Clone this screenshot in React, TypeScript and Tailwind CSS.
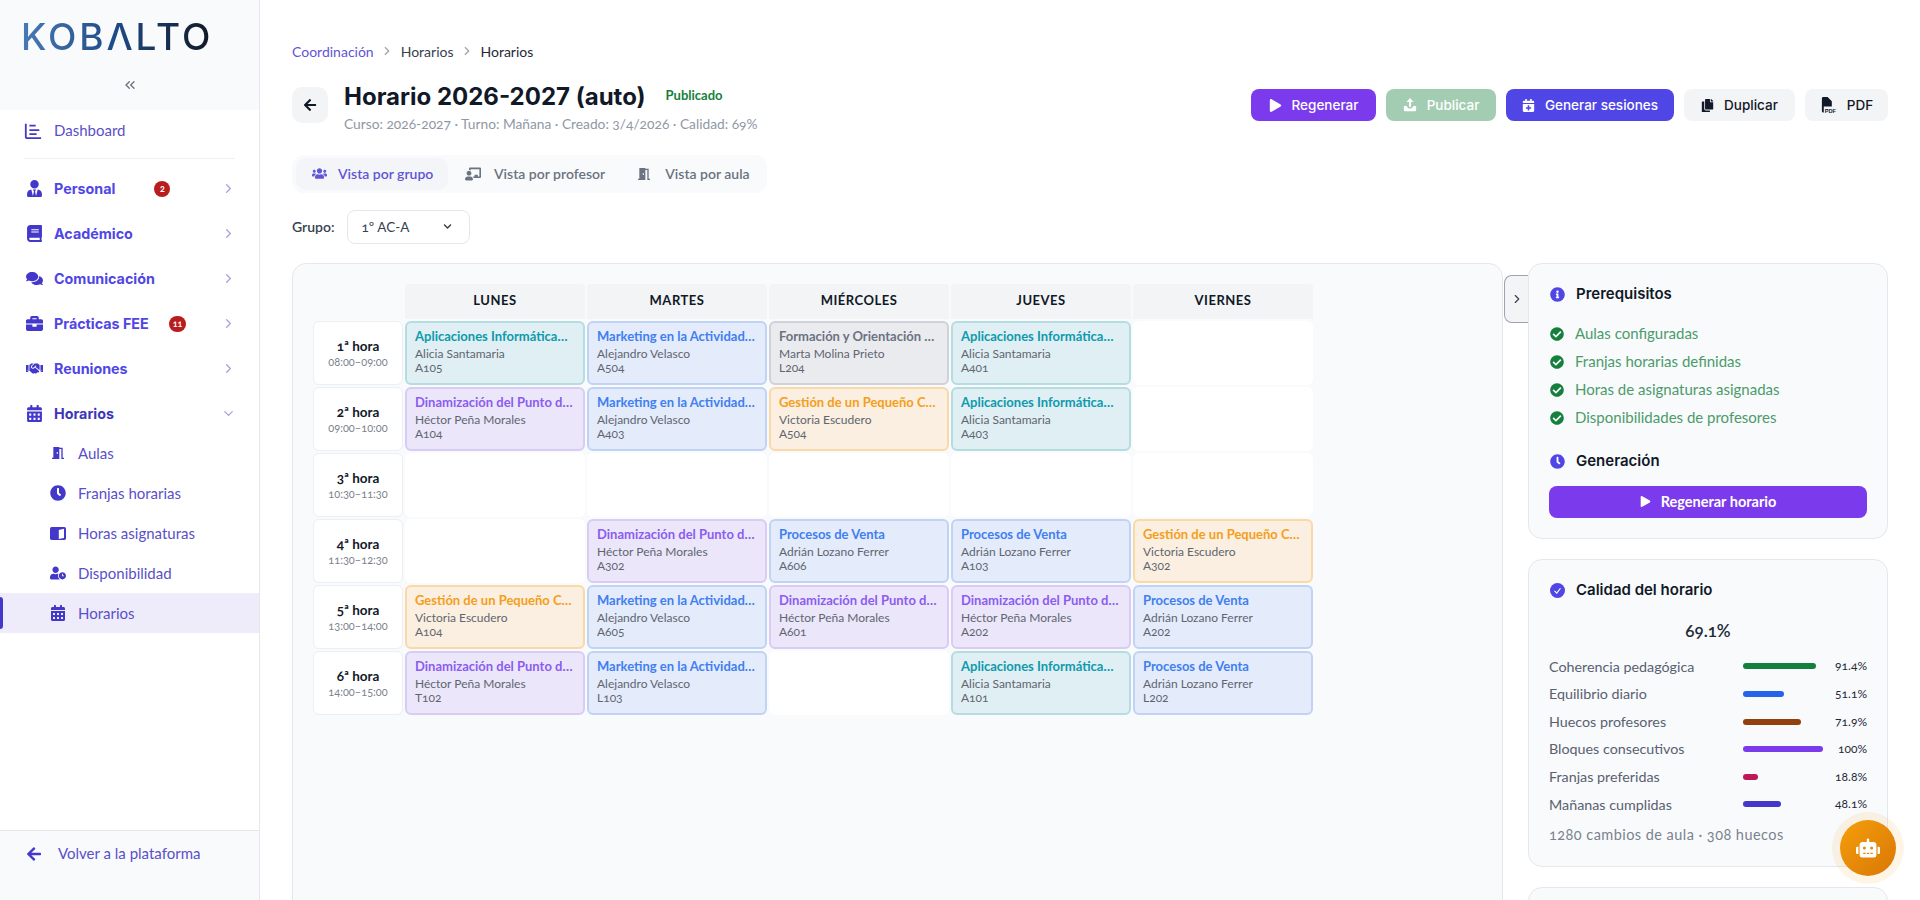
import React from "react";
import { FaUserTie, FaBook, FaComments, FaBriefcase, FaHandshake, FaCalendarAlt, FaClock, FaUserClock, FaArrowLeft, FaUsers, FaChalkboardTeacher, FaPlay, FaCalendarPlus, FaCopy, FaCheckCircle, FaInfoCircle, FaRobot, FaChevronDown } from "react-icons/fa";
import { MdMeetingRoom } from "react-icons/md";
import { LuChevronRight, LuChevronDown, LuChevronsLeft } from "react-icons/lu";

const body = "font-['Lato','Noto_Sans',sans-serif]";
const head = "font-['Inter','Noto_Sans',sans-serif]";
const indigo = "text-[#4338ca]";

function DashIcon() {
  return (
    <svg viewBox="0 0 20 20" className="w-[18px] h-[18px]" fill="none" stroke="#4338ca" strokeWidth="2">
      <path d="M2 2v14a2 2 0 0 0 2 2h15" />
      <path d="M6 4h7M6 9h11M6 13.5h8" />
    </svg>
  );
}

function BookIcon() {
  return (
    <svg viewBox="0 0 20 18" className="w-[16px] h-[15px]">
      <rect x="0" y="1" width="20" height="16" rx="2" fill="#4338ca" />
      <path d="M11 4.5 17.5 3v11.5l-6.5 1.5z" fill="#fff" />
    </svg>
  );
}

function UploadIcon() {
  return (
    <svg viewBox="0 0 16 16" className="w-[14px] h-[14px]" fill="currentColor">
      <path d="M8 0 4 4.5h2.8V10h2.4V4.5H12z" />
      <path d="M1 9h3.2c.4 1.7 2 3 3.8 3s3.4-1.3 3.8-3H15v5a1 1 0 0 1-1 1H2a1 1 0 0 1-1-1z" />
    </svg>
  );
}

function PdfIcon() {
  return (
    <svg viewBox="0 0 18 18" className="w-[17px] h-[17px]" fill="currentColor">
      <path d="M2 1.5A1.5 1.5 0 0 1 3.5 0H8l4.5 4.5V10H4v6.5H3.5A1.5 1.5 0 0 1 2 15z" />
      <text x="5" y="16.5" fontSize="6" fontWeight="700" fontFamily="'Liberation Sans', sans-serif">PDF</text>
    </svg>
  );
}

function Parent({ icon, label, badge, badgeMl, open }: { icon: React.ReactNode; label: string; badge?: string; badgeMl?: string; open?: boolean }) {
  return (
    <div className="h-[45px] flex items-center pl-6 pr-[23px] relative">
      <span className={`w-[20px] flex justify-center text-[17px] ${indigo}`}>{icon}</span>
      <span className={`ml-[10px] text-[14.3px] font-bold ${head} ${open ? "text-[#3d35b8]" : "text-[#4f46e5]"}`}>{label}</span>
      {badge && (
        <span className={`${badgeMl} min-w-[16px] h-[16px] px-1 rounded-full bg-[#b91c1c] text-white text-[9px] font-bold flex items-center justify-center`}>{badge}</span>
      )}
      <span className="ml-auto text-[#a5a3d9] text-[15px]">{open ? <LuChevronDown /> : <LuChevronRight />}</span>
    </div>
  );
}

function Sub({ icon, label, active }: { icon: React.ReactNode; label: string; active?: boolean }) {
  return (
    <div className={`h-[40px] flex items-center pl-[50px] relative ${active ? "bg-[#eeecfb]" : ""}`}>
      {active && <span className="absolute left-0 top-1 bottom-1 w-[3px] rounded-r bg-[#4338ca]" />}
      <span className={`w-[16px] flex justify-center text-[16px] ${indigo}`}>{icon}</span>
      <span className="ml-[12px] text-[15px] text-[#5a50c8]">{label}</span>
    </div>
  );
}

function Sidebar() {
  return (
    <aside className="w-[260px] shrink-0 h-[900px] border-r border-[#e5e7eb] bg-white flex flex-col">
      <div className="h-[110px] bg-[#f8fafc] flex flex-col items-center">
        <div className="self-start ml-[21px] mt-[16px] h-[40px] flex items-center">
          <span className={`text-[37px] leading-none font-medium tracking-[2.9px] ${head} bg-gradient-to-r from-[#4a7ab5] via-[#1d4a85] to-[#111827] bg-clip-text text-transparent`}>KOBΛLTO</span>
        </div>
        <LuChevronsLeft className="mt-[21px] text-[#6b7280] text-[16px]" />
      </div>
      <div className="h-[41px] flex items-center pl-6">
        <DashIcon />
        <span className="ml-[12px] text-[15px] text-[#5a50c8]">Dashboard</span>
      </div>
      <div className="mx-6 border-t border-[#eef0f3] mt-[7px] mb-[7px]" />
      <Parent icon={<FaUserTie />} label="Personal" badge="2" badgeMl="ml-[39px]" />
      <Parent icon={<FaBook />} label="Académico" />
      <Parent icon={<FaComments />} label="Comunicación" />
      <Parent icon={<FaBriefcase />} label="Prácticas FEE" badge="11" badgeMl="ml-[20px]" />
      <Parent icon={<FaHandshake />} label="Reuniones" />
      <Parent icon={<FaCalendarAlt />} label="Horarios" open />
      <div className="-mt-[3px]">
        <Sub icon={<MdMeetingRoom />} label="Aulas" />
        <Sub icon={<FaClock />} label="Franjas horarias" />
        <Sub icon={<BookIcon />} label="Horas asignaturas" />
        <Sub icon={<FaUserClock />} label="Disponibilidad" />
        <Sub icon={<FaCalendarAlt />} label="Horarios" active />
      </div>
      <div className="mt-auto h-[70px] bg-[#f8fafc] border-t border-[#e5e7eb] flex items-center pl-[26px] pb-[24px]">
        <FaArrowLeft className={`text-[16px] ${indigo}`} />
        <span className="ml-[16px] text-[15px] text-[#5a50c8]">Volver a la plataforma</span>
      </div>
    </aside>
  );
}

function Btn({ icon, label, cls }: { icon: React.ReactNode; label: string; cls: string }) {
  return (
    <button className={`h-[32px] rounded-[8px] flex items-center justify-center gap-[10px] text-[13.5px] font-medium ${head} ${cls}`}>
      <span className="text-[13px]">{icon}</span>
      {label}
    </button>
  );
}

type C = { t: string; p: string; r: string; k: "teal" | "blue" | "violet" | "orange" | "gray" };
const styles: Record<C["k"], string> = {
  teal: "bg-[#dfeff3] border-[#b5dce0] text-[#0e9aad]",
  blue: "bg-[#e4ebfb] border-[#c0d3f5] text-[#3f7ff0]",
  violet: "bg-[#ebe6fa] border-[#d8ccf5] text-[#8b5cf0]",
  orange: "bg-[#faefe0] border-[#fad9a6] text-[#f59e1b]",
  gray: "bg-[#e9ebef] border-[#cfd3d9] text-[#6b7280]",
};
const ai = (r: string): C => ({ t: "Aplicaciones Informática…", p: "Alicia Santamaria", r, k: "teal" });
const mk = (r: string): C => ({ t: "Marketing en la Actividad…", p: "Alejandro Velasco", r, k: "blue" });
const dn = (r: string): C => ({ t: "Dinamización del Punto d…", p: "Héctor Peña Morales", r, k: "violet" });
const ge = (r: string): C => ({ t: "Gestión de un Pequeño C…", p: "Victoria Escudero", r, k: "orange" });
const pv = (r: string): C => ({ t: "Procesos de Venta", p: "Adrián Lozano Ferrer", r, k: "blue" });
const fo = (r: string): C => ({ t: "Formación y Orientación …", p: "Marta Molina Prieto", r, k: "gray" });

const rows: { n: string; h: string; c: (C | null)[] }[] = [
  { n: "1ª hora", h: "08:00–09:00", c: [ai("A105"), mk("A504"), fo("L204"), ai("A401"), null] },
  { n: "2ª hora", h: "09:00–10:00", c: [dn("A104"), mk("A403"), ge("A504"), ai("A403"), null] },
  { n: "3ª hora", h: "10:30–11:30", c: [null, null, null, null, null] },
  { n: "4ª hora", h: "11:30–12:30", c: [null, dn("A302"), pv("A606"), pv("A103"), ge("A302")] },
  { n: "5ª hora", h: "13:00–14:00", c: [ge("A104"), mk("A605"), dn("A601"), dn("A202"), pv("A202")] },
  { n: "6ª hora", h: "14:00–15:00", c: [dn("T102"), mk("L103"), null, ai("A101"), pv("L202")] },
];

function Cell({ c }: { c: C | null }) {
  if (!c) return <div className="bg-white rounded-[6px] h-[64px]" />;
  const [bg, bd, tx] = styles[c.k].split(" ");
  return (
    <div className={`h-[64px] rounded-[6px] border-2 px-2 pt-[3px] overflow-hidden whitespace-nowrap ${bg} ${bd}`}>
      <div className={`text-[13px] leading-[20px] font-bold ${tx}`}>{c.t}</div>
      <div className="text-[12px] leading-[14px] text-[#5f6570] mt-[1px]">{c.p}</div>
      <div className="text-[12px] leading-[14px] text-[#5f6570]">{c.r}</div>
    </div>
  );
}

function Schedule() {
  return (
    <div className="w-[1211px] shrink-0 h-[700px] rounded-t-[14px] border border-[#e5e7eb] bg-[#f8fafc] pt-5 pl-5">
      <div className="grid grid-cols-[90px_repeat(5,180px)] gap-[2px]">
        <div className="h-[35px]" />
        {["LUNES", "MARTES", "MIÉRCOLES", "JUEVES", "VIERNES"].map((d) => (
          <div key={d} className="h-[35px] bg-[#f3f4f6] rounded-t-[4px] flex items-center justify-center text-[13px] font-bold tracking-[0.5px] text-[#111827]">{d}</div>
        ))}
        {rows.map((r) => (
          <React.Fragment key={r.n}>
            <div className="h-[64px] bg-white border border-[#eceff3] rounded-[6px] flex flex-col items-center justify-center">
              <span className="text-[13.5px] leading-[18px] font-bold text-[#111827]">{r.n}</span>
              <span className="text-[11px] leading-[14px] text-[#7b828e]">{r.h}</span>
            </div>
            {r.c.map((c, i) => (
              <Cell key={i} c={c} />
            ))}
          </React.Fragment>
        ))}
      </div>
    </div>
  );
}

function Check({ label }: { label: string }) {
  return (
    <div className="h-[28px] flex items-center">
      <FaCheckCircle className="text-[#15803d] text-[14px] ml-[1px]" />
      <span className="ml-[11px] text-[15px] text-[#4c9b6a]">{label}</span>
    </div>
  );
}

function Metric({ l, v, w, c }: { l: string; v: string; w: number; c: string }) {
  return (
    <div className="h-[27.6px] flex items-center">
      <span className="w-[194px] text-[14.3px] text-[#596170]">{l}</span>
      <div className="w-[80px] h-[6px]">
        <div className={`h-[6px] rounded-full ${c}`} style={{ width: w }} />
      </div>
      <span className="ml-auto text-[12px] text-[#1f2937]">{v}</span>
    </div>
  );
}

function Side() {
  return (
    <div className="w-[360px] shrink-0 flex flex-col gap-[20px]">
      <div className="h-[276px] rounded-[14px] border border-[#e5e7eb] bg-[#f8fafc] px-5 pt-[21px]">
        <div className="flex items-center h-[20px]">
          <FaInfoCircle className="text-[#4f46e5] text-[15px] ml-[1px]" />
          <span className={`ml-[11px] text-[15px] font-semibold text-[#111827] ${head}`}>Prerequisitos</span>
        </div>
        <div className="mt-[15px]">
          <Check label="Aulas configuradas" />
          <Check label="Franjas horarias definidas" />
          <Check label="Horas de asignaturas asignadas" />
          <Check label="Disponibilidades de profesores" />
        </div>
        <div className="flex items-center h-[20px] mt-[20px]">
          <FaClock className="text-[#4f46e5] text-[15px] ml-[1px]" />
          <span className={`ml-[11px] text-[15px] font-semibold text-[#111827] ${head}`}>Generación</span>
        </div>
        <button className="mt-[14px] w-full h-[32px] rounded-[8px] bg-[#7c3aed] text-white text-[14.5px] font-bold flex items-center justify-center gap-[10px]">
          <FaPlay className="text-[11px]" />
          Regenerar horario
        </button>
      </div>
      <div className="h-[308px] rounded-[14px] border border-[#e5e7eb] bg-[#f8fafc] px-5 pt-[21px]">
        <div className="flex items-center h-[20px]">
          <span className="ml-[1px] w-[15px] h-[15px] rounded-full bg-[#4f46e5] flex items-center justify-center">
            <svg viewBox="0 0 12 12" className="w-[9px] h-[9px]" fill="none" stroke="white" strokeWidth="1.6"><path d="M2 6.5 5 9.5 10 3" /></svg>
          </span>
          <span className={`ml-[11px] text-[15px] font-semibold text-[#111827] ${head}`}>Calidad del horario</span>
        </div>
        <div className="mt-[18px] h-[24px] flex items-center justify-center text-[17px] font-semibold text-[#1f2937]">69.1%</div>
        <div className="mt-[10px]">
          <Metric l="Coherencia pedagógica" v="91.4%" w={73} c="bg-[#15803d]" />
          <Metric l="Equilibrio diario" v="51.1%" w={41} c="bg-[#2563eb]" />
          <Metric l="Huecos profesores" v="71.9%" w={58} c="bg-[#92400e]" />
          <Metric l="Bloques consecutivos" v="100%" w={80} c="bg-[#7c3aed]" />
          <Metric l="Franjas preferidas" v="18.8%" w={15} c="bg-[#be185d]" />
          <Metric l="Mañanas cumplidas" v="48.1%" w={38} c="bg-[#4338ca]" />
        </div>
        <div className="mt-[6px] text-[14.5px] tracking-[0.45px] text-[#7b828e]">1280 cambios de aula · 308 huecos</div>
      </div>
      <div className="h-[40px] rounded-t-[14px] border border-[#e5e7eb] bg-[#f8fafc]" />
    </div>
  );
}

export default function App() {
  return (
    <div className={`w-[1920px] h-[900px] overflow-hidden flex bg-white relative oldstyle-nums ${body}`}>
      <Sidebar />
      <main className="flex-1 min-w-0 pl-[32px] pr-[32px] pt-[41px]">
        <div className="h-[20px] flex items-center text-[14px]">
          <span className="text-[#5f55d6]">Coordinación</span>
          <LuChevronRight className="mx-[6.5px] text-[#9ca3af] text-[14px]" />
          <span className="text-[#374151]">Horarios</span>
          <LuChevronRight className="mx-[6.5px] text-[#9ca3af] text-[14px]" />
          <span className="text-[#1f2937]">Horarios</span>
        </div>
        <div className="mt-[26px] flex items-start">
          <button className="w-[36px] h-[36px] rounded-[10px] bg-[#f3f4f6] flex items-center justify-center text-[#111827] text-[14px]"><FaArrowLeft /></button>
          <div className="ml-[16px] -mt-[5px]">
            <div className="flex items-center h-[30px]">
              <span className={`text-[24px] font-bold text-[#111827] ${head}`}>Horario 2026-2027 (auto)</span>
              <span className="ml-[20px] -mt-[2px] text-[13px] font-bold text-[#15803d]">Publicado</span>
            </div>
            <div className="text-[13.75px] mt-[2px] text-[#9098a4]">Curso: 2026-2027 · Turno: Mañana · Creado: 3/4/2026 · Calidad: 69%</div>
          </div>
          <div className="ml-auto flex gap-[10px] mt-[2px]">
            <Btn icon={<FaPlay />} label="Regenerar" cls="w-[125px] bg-[#7c3aed] text-white" />
            <Btn icon={<UploadIcon />} label="Publicar" cls="w-[110px] bg-[#a3cdb2] text-white" />
            <Btn icon={<FaCalendarPlus />} label="Generar sesiones" cls="w-[168px] bg-[#4f46e5] text-white" />
            <Btn icon={<FaCopy />} label="Duplicar" cls="w-[111px] bg-[#f3f4f6] text-[#111827]" />
            <Btn icon={<PdfIcon />} label="PDF" cls="w-[83px] bg-[#f3f4f6] text-[#111827]" />
          </div>
        </div>
        <div className="mt-[20px] w-[475px] h-[38px] rounded-[12px] bg-[#f8fafc] flex items-center pl-[4px] text-[14px] font-semibold">
          <div className="w-[152px] h-[32px] rounded-[10px] bg-[#f3f5f8] flex items-center pl-[16px] text-[#5f55d6]">
            <FaUsers className="text-[15px]" />
            <span className="ml-[11px]">Vista por grupo</span>
          </div>
          <div className="ml-[17px] flex items-center text-[#6b7280]">
            <FaChalkboardTeacher className="text-[16px]" />
            <span className="ml-[13px]">Vista por profesor</span>
          </div>
          <div className="ml-[31px] flex items-center text-[#6b7280]">
            <MdMeetingRoom className="text-[16px]" />
            <span className="ml-[13px]">Vista por aula</span>
          </div>
        </div>
        <div className="mt-[17px] flex items-center h-[34px]">
          <span className="text-[14px] font-semibold text-[#374151]">Grupo:</span>
          <div className="ml-[12px] w-[123px] h-[34px] rounded-[8px] border border-[#e5e7eb] bg-white flex items-center pl-[14px] text-[13.5px] text-[#374151]">
            1º AC-A
            <FaChevronDown className="ml-auto mr-[17px] text-[9px] text-[#374151]" />
          </div>
        </div>
        <div className="mt-[19px] flex relative">
          <Schedule />
          <span className="absolute left-[1212px] top-[12px] w-[24px] h-[48px] rounded-l-[8px] border border-[#9ca3af] border-r-0 bg-[#f3f4f6] flex items-center justify-center text-[#374151] text-[14px] z-10"><LuChevronRight /></span>
          <div className="ml-[25px]"><Side /></div>
        </div>
      </main>
      <div className="absolute left-[1840px] top-[820px] w-[56px] h-[56px] rounded-full bg-gradient-to-br from-[#f59e0b] to-[#d97706] ring-8 ring-[#f59e0b]/10 flex items-center justify-center text-white text-[24px]">
        <FaRobot />
      </div>
    </div>
  );
}
